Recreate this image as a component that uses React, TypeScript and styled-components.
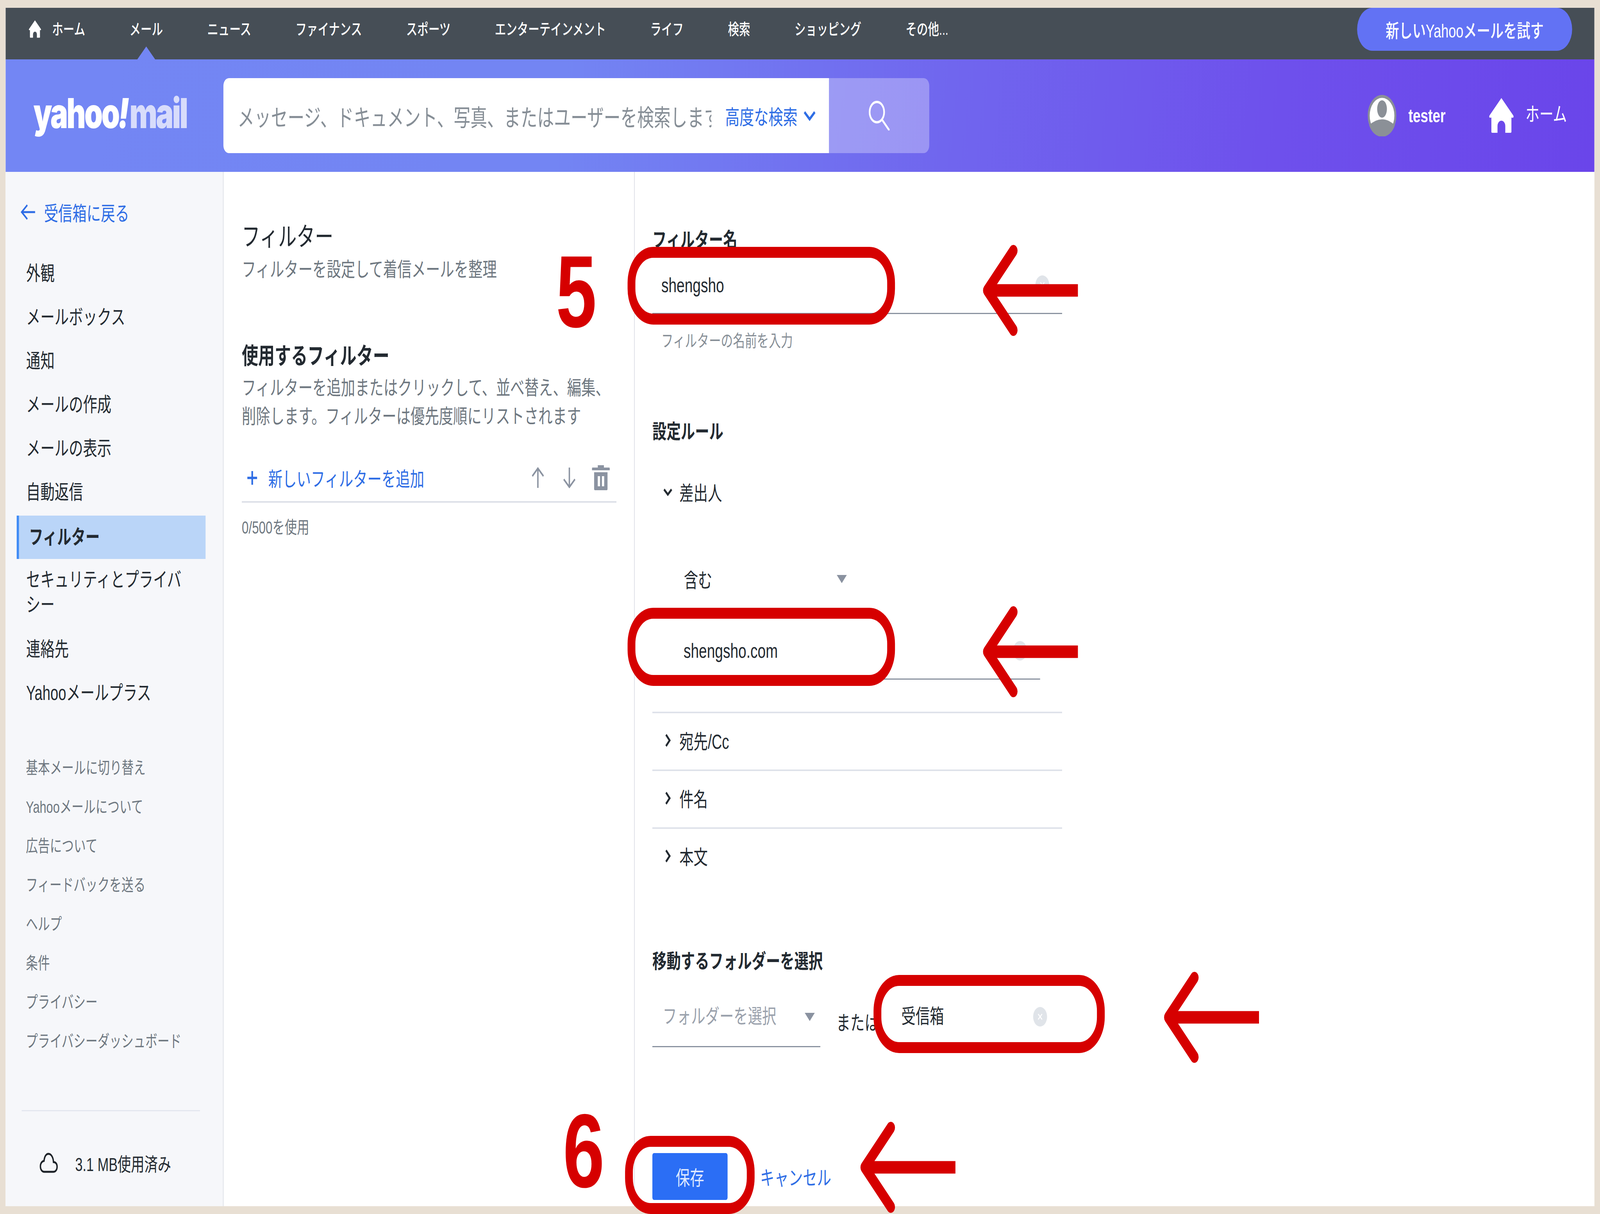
import styled, { createGlobalStyle } from "styled-components";

const DESIGN_WIDTH = 5744;
const DESIGN_HEIGHT = 3108;

const GlobalStyle = createGlobalStyle`
    * { box-sizing: border-box; }
    html, body {
        margin: 0;
        overflow: hidden;
        background: #e8dfd3;
    }
    body {
        font-family: "Liberation Sans", "Noto Sans CJK JP", sans-serif;
        color: #232a31;
    }
`;

const Frame = styled.div`
    position: relative;
    width: 5744px;
    height: 3108px;
    padding: 20px;
    overflow: hidden;
    background: #e8dfd3;
    transform-origin: 0 0;
`;

const Page = styled.div`
    width: 5704px;
    height: 3068px;
    display: flex;
    flex-direction: column;
    background: #fff;
    overflow: hidden;
`;

const TopNav = styled.nav`
    height: 132px;
    flex: none;
    display: flex;
    align-items: flex-start;
    padding-left: 83px;
    background: #464e56;
`;

const NavHome = styled.svg`
    width: 45px;
    height: 45px;
    margin: 32px 39px 0 0;
    flex: none;
`;

const NavLink = styled.a<{ $active?: boolean }>`
    position: relative;
    height: 132px;
    line-height: 110px;
    margin-right: 159px;
    font-size: 40px;
    font-weight: 500;
    color: #fff;
    white-space: nowrap;
    ${(p) =>
        p.$active &&
        `
        &::after {
            content: "";
            position: absolute;
            left: 28px;
            bottom: 0;
            border-left: 32px solid transparent;
            border-right: 32px solid transparent;
            border-bottom: 33px solid #7386f4;
        }
    `}
`;

const TryButton = styled.button`
    margin-left: auto;
    margin-right: 80px;
    width: 772px;
    height: 110px;
    border: none;
    border-radius: 55px;
    background: #6272f4;
    color: #fff;
    font-family: inherit;
    font-size: 48px;
    font-weight: 500;
`;

const Header = styled.header`
    height: 288px;
    flex: none;
    display: flex;
    align-items: center;
    padding-right: 99px;
    background: linear-gradient(100deg, #7386f4 0%, #7385f3 35%, #7065ee 60%, #6e50ec 80%, #6a45ea 100%);
`;

const Logo = styled.div`
    width: 782px;
    flex: none;
    padding-left: 100px;
    font-family: "Inter", "Liberation Sans", sans-serif;
    font-size: 106px;
    font-weight: 900;
    letter-spacing: -5px;
    color: #fff;
    white-space: nowrap;
    line-height: 1;
    transform: translateY(-6px);
`;

const LogoBang = styled.span`
    font-style: italic;
    margin: 0 6px 0 -2px;
`;

const LogoMail = styled.span`
    color: #d8dcfb;
`;

const SearchBox = styled.div`
    width: 2174px;
    height: 192px;
    flex: none;
    display: flex;
    align-items: center;
    padding-left: 51px;
    background: #fff;
    border-radius: 20px 0 0 20px;
`;

const SearchPlaceholder = styled.div`
    width: 1701px;
    flex: none;
    overflow: hidden;
    white-space: nowrap;
    font-size: 60px;
    color: #868e96;
`;

const AdvancedSearch = styled.a`
    margin-left: 49px;
    font-size: 52px;
    color: #2e6de5;
    white-space: nowrap;
`;

const AdvancedChevron = styled.svg`
    width: 45px;
    height: 27px;
    margin-left: 21px;
`;

const SearchButton = styled.button`
    width: 360px;
    height: 192px;
    flex: none;
    display: flex;
    align-items: center;
    justify-content: center;
    border: none;
    border-radius: 0 20px 20px 0;
    background: rgba(255, 255, 255, 0.3);
`;

const SearchIcon = styled.svg`
    width: 76px;
    height: 76px;
`;

const HeaderRight = styled.div`
    margin-left: auto;
    display: flex;
    align-items: center;
`;

const Avatar = styled.svg`
    width: 103px;
    height: 106px;
    margin-right: 43px;
`;

const UserName = styled.span`
    font-size: 49px;
    font-weight: 700;
    color: #fff;
    margin-right: 156px;
`;

const HomeIcon = styled.svg`
    width: 88px;
    height: 90px;
    margin-right: 43px;
`;

const HomeLabel = styled.span`
    font-size: 50px;
    color: #fff;
    transform: translateY(-8px);
`;

const Main = styled.div`
    flex: 1;
    display: flex;
    min-height: 0;
`;

const Sidebar = styled.aside`
    width: 780px;
    flex: none;
    padding: 47px 0 0 0;
    background: #f6f7fa;
`;

const BackLink = styled.a`
    height: 112px;
    display: flex;
    align-items: center;
    padding-left: 54px;
    margin-bottom: 46px;
    font-size: 51px;
    color: #2e6de5;
`;

const BackArrow = styled.svg`
    width: 53px;
    height: 42px;
    margin-right: 31px;
`;

const SideItem = styled.a<{ $active?: boolean }>`
    display: flex;
    align-items: center;
    min-height: 112px;
    margin: 0 62px 0 40px;
    padding: 0 70px 0 ${(p) => (p.$active ? "36px" : "34px")};
    font-size: 51px;
    line-height: 64px;
    ${(p) =>
        p.$active &&
        `
        min-height: 111px;
        margin-top: 3px;
        font-weight: 700;
        background: #bad5f8;
        border-left: 8px solid #3f8bf5;
    `}
`;

const SideItemWrapped = styled(SideItem)`
    padding-top: 22px;
    padding-bottom: 22px;
    margin-bottom: 4px;
`;

const FooterLinks = styled.div`
    margin-top: 81px;
    margin-bottom: 130px;
`;

const FooterLink = styled.a`
    display: flex;
    align-items: center;
    height: 100px;
    padding-left: 73px;
    font-size: 43px;
    color: #6e7780;
`;

const SideDivider = styled.div`
    height: 3px;
    margin: 0 82px 0 58px;
    background: #e4e7ef;
`;

const Storage = styled.div`
    height: 52px;
    margin-top: 106px;
    display: flex;
    align-items: center;
    padding-left: 122px;
    font-size: 48px;
`;

const CloudIcon = styled.svg`
    width: 66px;
    height: 52px;
    margin-right: 62px;
`;

const ListColumn = styled.section`
    width: 1479px;
    flex: none;
    padding: 124px 0 0 65px;
    border-left: 3px solid #e1e3ea;
    border-right: 3px solid #e1e3ea;
`;

const PageTitle = styled.h1`
    margin: 0;
    font-size: 66px;
    line-height: 84px;
    font-weight: 400;
`;

const PageSub = styled.p`
    margin: 9px 0 0;
    font-size: 51px;
    line-height: 68px;
    color: #6e7780;
`;

const ListHeading = styled.h2`
    margin: 147px 0 0;
    font-size: 59px;
    line-height: 80px;
    font-weight: 700;
`;

const ListDesc = styled.p`
    margin: 5px 0 0;
    width: 1345px;
    font-size: 51px;
    line-height: 73px;
    color: #6e7780;
`;

const AddRow = styled.div`
    width: 1345px;
    height: 120px;
    margin-top: 64px;
    display: flex;
    align-items: center;
    padding: 0 0 4px 18px;
    border-bottom: 4px solid #dde0e8;
`;

const PlusIcon = styled.svg`
    width: 39px;
    height: 39px;
    margin-right: 38px;
`;

const AddLabel = styled.a`
    font-size: 51px;
    color: #2e6de5;
`;

const RowIcons = styled.div`
    margin-left: auto;
    display: flex;
`;

const RowIcon = styled.div`
    width: 113px;
    display: flex;
    justify-content: center;
    align-items: center;
`;

const UsageText = styled.p`
    margin: 34px 0 0;
    font-size: 44px;
    line-height: 60px;
    color: #6e7780;
`;

const EditColumn = styled.section`
    flex: 1;
    padding: 140px 0 0 63px;
`;

const EditInner = styled.div`
    width: 1471px;
`;

const FieldLabel = styled.h3<{ $top?: number }>`
    margin: ${(p) => p.$top ?? 0}px 0 0;
    font-size: 51px;
    line-height: 70px;
    font-weight: 700;
`;

const TextRow = styled.div`
    display: flex;
    align-items: center;
    padding: 45px 46px 36px 32px;
    border-bottom: 3px solid #8a92a0;
`;

const ValueText = styled.span`
    flex: 1;
    font-size: 52px;
    line-height: 70px;
`;

const ClearButton = styled.span`
    width: 50px;
    height: 50px;
    flex: none;
    display: flex;
    align-items: center;
    justify-content: center;
    border-radius: 50%;
    background: #e0e4e9;
`;

const ClearX = styled.svg`
    width: 20px;
    height: 20px;
`;

const HelperText = styled.p`
    margin: 41px 0 0;
    padding-left: 32px;
    font-size: 43px;
    line-height: 56px;
    color: #868e96;
`;

const RuleHead = styled.div`
    height: 80px;
    margin-top: 78px;
    display: flex;
    align-items: center;
    padding-left: 39px;
    font-size: 51px;
`;

const RuleChevron = styled.svg`
    width: 33px;
    height: 33px;
    margin-right: 25px;
`;

const ConditionSelect = styled.div`
    width: 720px;
    height: 80px;
    margin-top: 143px;
    display: flex;
    align-items: center;
    justify-content: space-between;
    padding: 0 22px 0 113px;
    font-size: 51px;
`;

const DropTriangle = styled.i`
    width: 0;
    height: 0;
    border-left: 18px solid transparent;
    border-right: 18px solid transparent;
    border-top: 21px solid #8a92a0;
`;

const ConditionValue = styled(TextRow)`
    width: 1308px;
    margin-left: 84px;
    padding: 109px 47px 36px 28px;
`;

const Accordion = styled.div`
    margin-top: 82px;
`;

const AccordionRow = styled.div`
    height: 148px;
    display: flex;
    align-items: center;
    padding: 0 0 6px 39px;
    border-top: 4px solid #dfe2ea;
    font-size: 51px;
`;

const FolderRow = styled.div`
    display: flex;
    align-items: flex-start;
`;

const FolderSelect = styled.div`
    width: 603px;
    flex: none;
    display: flex;
    align-items: center;
    justify-content: space-between;
    padding: 71px 20px 40px 37px;
    border-bottom: 3px solid #8a92a0;
    font-size: 51px;
    line-height: 70px;
    color: #9aa1ac;
`;

const OrText = styled.span`
    flex: none;
    margin: 88px 0 0 57px;
    font-size: 51px;
    line-height: 70px;
`;

const FolderInput = styled.div`
    flex: none;
    display: flex;
    align-items: center;
    margin: 71px 0 0 81px;
    font-size: 51px;
    line-height: 70px;
`;

const FolderClear = styled(ClearButton)`
    margin-left: 320px;
`;

const Actions = styled.div`
    margin-top: 271px;
    display: flex;
    align-items: center;
`;

const SaveButton = styled.button`
    width: 270px;
    height: 120px;
    border: none;
    border-radius: 6px;
    background: #2b6ef5;
    color: #dfe9ff;
    font-family: inherit;
    font-size: 51px;
`;

const CancelLink = styled.a`
    margin-left: 117px;
    font-size: 51px;
    color: #2e6de5;
`;

// red annotations drawn on top of the screenshot
const Ring = styled.div<{ $left: number; $top: number; $w: number; $h: number }>`
    position: absolute;
    left: ${(p) => p.$left}px;
    top: ${(p) => p.$top}px;
    width: ${(p) => p.$w}px;
    height: ${(p) => p.$h}px;
    border: 28px solid #d60000;
    border-radius: 92px;
`;

const StepNumber = styled.div<{ $left: number; $top: number; $size: number }>`
    position: absolute;
    left: ${(p) => p.$left}px;
    top: ${(p) => p.$top}px;
    font-family: "Liberation Sans", sans-serif;
    font-size: ${(p) => p.$size}px;
    font-weight: 700;
    line-height: 1;
    color: #d60000;
`;

const ArrowSvg = styled.svg<{ $left: number; $top: number }>`
    position: absolute;
    left: ${(p) => p.$left}px;
    top: ${(p) => p.$top}px;
    width: 342px;
    height: 235px;
`;

function RedArrow({ left, top }: { left: number; top: number }) {
    return (
        <ArrowSvg $left={left} $top={top} viewBox="0 0 342 235">
            <path d="M20 117.5H342" stroke="#d60000" strokeWidth="32" fill="none" />
            <path
                d="M110 16L16 117.5L110 219"
                stroke="#d60000"
                strokeWidth="30"
                strokeLinecap="round"
                strokeLinejoin="round"
                fill="none"
            />
        </ArrowSvg>
    );
}

function Chevron({ open }: { open?: boolean }) {
    return (
        <RuleChevron viewBox="0 0 33 33">
            <path
                d={open ? "M3 10L16.5 23L30 10" : "M10 2L23 16.5L10 31"}
                stroke="#232a31"
                strokeWidth="6"
                fill="none"
            />
        </RuleChevron>
    );
}

function ClearIcon() {
    return (
        <ClearX viewBox="0 0 20 20">
            <path d="M3 3L17 17M17 3L3 17" stroke="#fff" strokeWidth="3" />
        </ClearX>
    );
}

const navItems = ["ニュース", "ファイナンス", "スポーツ", "エンターテインメント", "ライフ", "検索", "ショッピング", "その他..."];
const sideItems = ["外観", "メールボックス", "通知", "メールの作成", "メールの表示", "自動返信"];
const footerItems = [
    "基本メールに切り替え",
    "Yahooメールについて",
    "広告について",
    "フィードバックを送る",
    "ヘルプ",
    "条件",
    "プライバシー",
    "プライバシーダッシュボード",
];

const housePath =
    "M44 0L87 45Q90 52 80 50V86Q80 89 77 89H58V72A14 14 0 0 0 30 72V89H11Q8 89 8 86V50Q-2 52 1 45Z";

export default function App() {
    // the page is drawn at design size; fit it to whatever window we actually got
    const fit = `scale(${window.innerWidth / DESIGN_WIDTH}, ${window.innerHeight / DESIGN_HEIGHT})`;

    return (
        <Frame style={{ transform: fit }}>
            <GlobalStyle />
            <Page>
                <TopNav>
                    <NavHome viewBox="0 0 88 90">
                        <path d={housePath} fill="#fff" />
                    </NavHome>
                    <NavLink>ホーム</NavLink>
                    <NavLink $active>メール</NavLink>
                    {navItems.map((n) => (
                        <NavLink key={n}>{n}</NavLink>
                    ))}
                    <TryButton>新しいYahooメールを試す</TryButton>
                </TopNav>

                <Header>
                    <Logo>
                        yahoo<LogoBang>!</LogoBang>
                        <LogoMail>mail</LogoMail>
                    </Logo>
                    <SearchBox>
                        <SearchPlaceholder>メッセージ、ドキュメント、写真、またはユーザーを検索します</SearchPlaceholder>
                        <AdvancedSearch>高度な検索</AdvancedSearch>
                        <AdvancedChevron viewBox="0 0 45 27">
                            <path d="M4 4L22.5 22L41 4" stroke="#2e6de5" strokeWidth="7" fill="none" />
                        </AdvancedChevron>
                    </SearchBox>
                    <SearchButton>
                        <SearchIcon viewBox="0 0 76 76">
                            <circle cx="30" cy="29" r="26" stroke="#fff" strokeWidth="6" fill="none" />
                            <path d="M49 49L73 74" stroke="#fff" strokeWidth="6" strokeLinecap="round" />
                        </SearchIcon>
                    </SearchButton>
                    <HeaderRight>
                        <Avatar viewBox="0 0 100 100" preserveAspectRatio="none">
                            <circle cx="50" cy="50" r="50" fill="#8b9097" />
                            <circle cx="50" cy="50" r="43" fill="#fff" />
                            <ellipse cx="50" cy="34" rx="17" ry="21" fill="#8b9097" />
                            <path d="M5 73Q50 45 95 73A50 50 0 0 1 5 73Z" fill="#8b9097" />
                        </Avatar>
                        <UserName>tester</UserName>
                        <HomeIcon viewBox="0 0 88 90">
                            <path d={housePath} fill="#fff" />
                        </HomeIcon>
                        <HomeLabel>ホーム</HomeLabel>
                    </HeaderRight>
                </Header>

                <Main>
                    <Sidebar>
                        <BackLink>
                            <BackArrow viewBox="0 0 53 42">
                                <path d="M52 21H5M24 3L4 21L24 39" stroke="#2e6de5" strokeWidth="5" fill="none" />
                            </BackArrow>
                            受信箱に戻る
                        </BackLink>
                        {sideItems.map((s) => (
                            <SideItem key={s}>{s}</SideItem>
                        ))}
                        <SideItem $active>フィルター</SideItem>
                        <SideItemWrapped>セキュリティとプライバシー</SideItemWrapped>
                        <SideItem>連絡先</SideItem>
                        <SideItem>Yahooメールプラス</SideItem>
                        <FooterLinks>
                            {footerItems.map((f) => (
                                <FooterLink key={f}>{f}</FooterLink>
                            ))}
                        </FooterLinks>
                        <SideDivider />
                        <Storage>
                            <CloudIcon viewBox="0 0 66 52">
                                <path
                                    d="M17 49H50C58 49 63 43 63 36C63 29 58 24 50 24C49 12 42 3 32 3C24 3 18 9 16 21C8 22 3 28 3 35C3 43 9 49 17 49Z"
                                    stroke="#1d2228"
                                    strokeWidth="5"
                                    fill="none"
                                />
                            </CloudIcon>
                            3.1 MB使用済み
                        </Storage>
                    </Sidebar>

                    <ListColumn>
                        <PageTitle>フィルター</PageTitle>
                        <PageSub>フィルターを設定して着信メールを整理</PageSub>
                        <ListHeading>使用するフィルター</ListHeading>
                        <ListDesc>
                            フィルターを追加またはクリックして、並べ替え、編集、削除します。フィルターは優先度順にリストされます
                        </ListDesc>
                        <AddRow>
                            <PlusIcon viewBox="0 0 39 39">
                                <path d="M19.5 2V37M2 19.5H37" stroke="#2e6de5" strokeWidth="6" />
                            </PlusIcon>
                            <AddLabel>新しいフィルターを追加</AddLabel>
                            <RowIcons>
                                <RowIcon>
                                    <svg width="44" height="54" viewBox="0 0 44 54">
                                        <path d="M22 3V53M2 23L22 3L42 23" stroke="#8b93a1" strokeWidth="5" fill="none" />
                                    </svg>
                                </RowIcon>
                                <RowIcon>
                                    <svg width="44" height="54" viewBox="0 0 44 54">
                                        <path d="M22 1V51M2 31L22 51L42 31" stroke="#8b93a1" strokeWidth="5" fill="none" />
                                    </svg>
                                </RowIcon>
                                <RowIcon>
                                    <svg width="64" height="64" viewBox="0 0 64 64">
                                        <path
                                            d="M21 0H43V6H62Q64 6 64 8V13H0V8Q0 6 2 6H21ZM8 18H56V61Q56 64 53 64H11Q8 64 8 61ZM21 28V54H29V28ZM36 28V54H44V28Z"
                                            fill="#8b93a1"
                                            fillRule="evenodd"
                                        />
                                    </svg>
                                </RowIcon>
                            </RowIcons>
                        </AddRow>
                        <UsageText>0/500を使用</UsageText>
                    </ListColumn>

                    <EditColumn>
                        <EditInner>
                            <FieldLabel>フィルター名</FieldLabel>
                            <TextRow>
                                <ValueText>shengsho</ValueText>
                                <ClearButton>
                                    <ClearIcon />
                                </ClearButton>
                            </TextRow>
                            <HelperText>フィルターの名前を入力</HelperText>

                            <FieldLabel $top={170}>設定ルール</FieldLabel>
                            <RuleHead>
                                <Chevron open />
                                差出人
                            </RuleHead>
                            <ConditionSelect>
                                含む
                                <DropTriangle />
                            </ConditionSelect>
                            <ConditionValue>
                                <ValueText>shengsho.com</ValueText>
                                <ClearButton>
                                    <ClearIcon />
                                </ClearButton>
                            </ConditionValue>
                            <Accordion>
                                <AccordionRow>
                                    <Chevron />
                                    宛先/Cc
                                </AccordionRow>
                                <AccordionRow>
                                    <Chevron />
                                    件名
                                </AccordionRow>
                                <AccordionRow>
                                    <Chevron />
                                    本文
                                </AccordionRow>
                            </Accordion>

                            <FieldLabel $top={161}>移動するフォルダーを選択</FieldLabel>
                            <FolderRow>
                                <FolderSelect>
                                    フォルダーを選択
                                    <DropTriangle />
                                </FolderSelect>
                                <OrText>または</OrText>
                                <FolderInput>
                                    受信箱
                                    <FolderClear>
                                        <ClearIcon />
                                    </FolderClear>
                                </FolderInput>
                            </FolderRow>

                            <Actions>
                                <SaveButton>保存</SaveButton>
                                <CancelLink>キャンセル</CancelLink>
                            </Actions>
                        </EditInner>
                    </EditColumn>
                </Main>
            </Page>

            <StepNumber $left={1996} $top={616} $size={262}>5</StepNumber>
            <Ring $left={2253} $top={632} $w={960} $h={199} />
            <RedArrow left={3528} top={626} />
            <Ring $left={2253} $top={1556} $w={960} $h={200} />
            <RedArrow left={3528} top={1551} />
            <Ring $left={3136} $top={2496} $w={830} $h={200} />
            <RedArrow left={4178} top={2487} />
            <StepNumber $left={2021} $top={2812} $size={268}>6</StepNumber>
            <Ring $left={2244} $top={2908} $w={465} $h={200} />
            <RedArrow left={3088} top={2871} />
        </Frame>
    );
}
